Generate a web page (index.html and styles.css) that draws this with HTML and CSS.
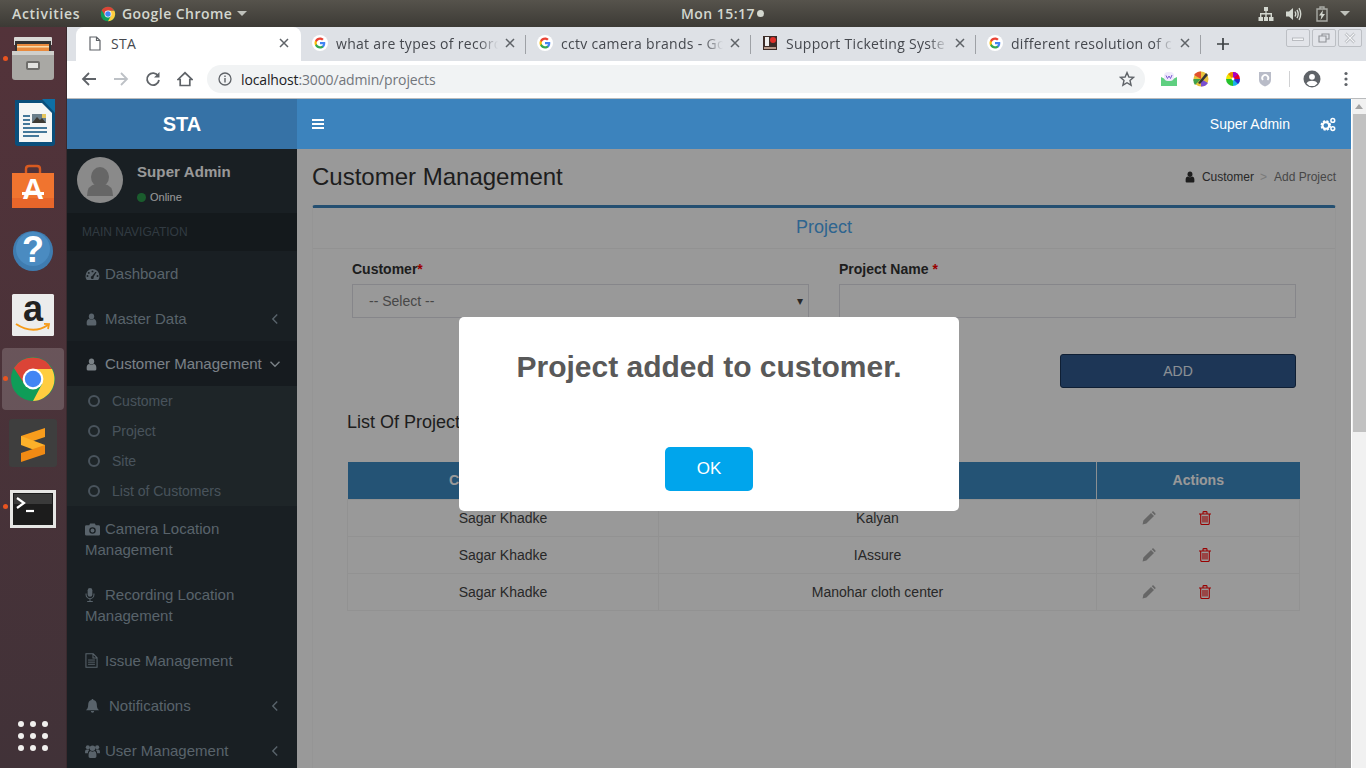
FILE: index.html
```html
<!DOCTYPE html>
<html lang="en">
<head>
<meta charset="utf-8">
<title>STA</title>
<link rel="stylesheet" href="styles.css">
</head>
<body>
<svg class="sprite" aria-hidden="true">
  <symbol id="i-chrome" viewBox="0 0 48 48">
    <circle cx="24" cy="24" r="22" fill="#0f9d58"/>
    <path fill="#db4437" d="M24 14H43.05A22 22 0 0 0 4.95 13L15.4 29 24 24Z"/>
    <path fill="#ffcd40" d="M24 14H43.05A22 22 0 0 1 24 46L33 29Z"/>
    <circle cx="24" cy="24" r="10.4" fill="#fff"/>
    <circle cx="24" cy="24" r="8.2" fill="#4285f4"/>
  </symbol>
  <symbol id="i-g" viewBox="-4 -4 32 32">
    <circle cx="12" cy="12" r="16" fill="#fff"/>
    <path fill="#4285F4" d="M22.56 12.25c0-.78-.07-1.53-.2-2.25H12v4.26h5.92c-.26 1.37-1.04 2.53-2.21 3.31v2.77h3.57c2.08-1.92 3.28-4.74 3.28-8.09z"/>
    <path fill="#34A853" d="M12 23c2.97 0 5.46-.98 7.28-2.66l-3.57-2.77c-.98.66-2.23 1.06-3.71 1.06-2.86 0-5.29-1.93-6.16-4.53H2.18v2.84C3.99 20.53 7.7 23 12 23z"/>
    <path fill="#FBBC05" d="M5.84 14.09c-.22-.66-.35-1.36-.35-2.09s.13-1.43.35-2.09V7.07H2.18C1.43 8.55 1 10.22 1 12s.43 3.45 1.18 4.93l2.85-2.22.81-.62z"/>
    <path fill="#EA4335" d="M12 5.38c1.62 0 3.06.56 4.21 1.64l3.15-3.15C17.45 2.09 14.97 1 12 1 7.7 1 3.99 3.47 2.18 7.07l3.66 2.84c.87-2.6 3.3-4.53 6.16-4.53z"/>
  </symbol>
  <symbol id="i-x" viewBox="0 0 10 10"><path d="M1 1 9 9M9 1 1 9" fill="none" stroke="currentColor" stroke-width="1.5"/></symbol>
  <symbol id="i-user" viewBox="0 0 16 18">
    <ellipse cx="8" cy="4.6" rx="3.9" ry="4.4" fill="currentColor"/>
    <path fill="currentColor" d="M1 16V13C1 10 2.8 8.6 4.6 8.3 6 9.6 10 9.6 11.4 8.3 13.2 8.6 15 10 15 13V16Q15 17.6 13.4 17.6H2.6Q1 17.6 1 16Z"/>
  </symbol>
  <symbol id="i-gauge" viewBox="0 0 16 14">
    <path fill="currentColor" fill-rule="evenodd" d="M8 1A7.5 7.5 0 0 0 .5 8.5C.5 10.3 1 11.8 2 13H14C15 11.8 15.5 10.3 15.5 8.5A7.5 7.5 0 0 0 8 1ZM8 2.6A1 1 0 1 1 8 4.7 1 1 0 0 1 8 2.6ZM4 4.2A1 1 0 1 1 4 6.3 1 1 0 0 1 4 4.2ZM12.4 4.2 9.2 9.6A1.6 1.6 0 1 1 7.6 8.7L11 4.2ZM2.6 7.6A1 1 0 1 1 2.6 9.7 1 1 0 0 1 2.6 7.6ZM13.4 7.6A1 1 0 1 1 13.4 9.7 1 1 0 0 1 13.4 7.6Z"/>
  </symbol>
  <symbol id="i-camera" viewBox="0 0 16 14">
    <path fill="currentColor" fill-rule="evenodd" d="M5.5 1H10.5L11.5 3H14.5Q16 3 16 4.5V12.5Q16 14 14.5 14H1.5Q0 14 0 12.5V4.5Q0 3 1.5 3H4.5ZM8 5A3.5 3.5 0 1 0 8 12 3.5 3.5 0 0 0 8 5ZM8 6.4A2.1 2.1 0 1 1 8 10.6 2.1 2.1 0 0 1 8 6.4Z"/>
  </symbol>
  <symbol id="i-mic" viewBox="0 0 10 15">
    <rect x="2.5" y="0" width="5" height="9.5" rx="2.5" fill="currentColor"/>
    <path d="M.8 6V7.2A4.2 4.2 0 0 0 9.2 7.2V6M5 11.5V14M2 14.4H8" fill="none" stroke="currentColor" stroke-width="1.1"/>
  </symbol>
  <symbol id="i-file" viewBox="0 0 14 16">
    <path fill="none" stroke="currentColor" stroke-width="1.1" d="M1 .8H8.8L13 5V15.2H1ZM8.6 1V5.2H13"/>
    <path fill="none" stroke="currentColor" stroke-width="1" d="M3.3 7.5H10.7M3.3 9.8H10.7M3.3 12.1H10.7"/>
  </symbol>
  <symbol id="i-bell" viewBox="0 0 16 15">
    <path fill="currentColor" d="M8 0C8.7 0 9 .5 9 1 11.4 1.5 12.6 3.2 12.6 6 12.6 9.4 13.6 11 15 12H1C2.4 11 3.4 9.4 3.4 6 3.4 3.2 4.6 1.5 7 1 7 .5 7.3 0 8 0ZM6.2 12.8H9.8A1.8 1.8 0 0 1 6.2 12.8Z"/>
  </symbol>
  <symbol id="i-users" viewBox="0 0 16 15">
    <g fill="currentColor">
      <circle cx="3" cy="3.5" r="2.2"/><circle cx="13" cy="3.5" r="2.2"/><circle cx="8" cy="4.6" r="3"/>
      <path d="M0 10V8Q0 6 2 6H4L4.4 6.5Q3 8 3 10H.6Z"/><path d="M16 10V8Q16 6 14 6H12L11.6 6.5Q13 8 13 10H15.4Z"/>
      <path d="M3.8 13.5V11Q3.8 8 6 7.6 8 9 10 7.6 12.2 8 12.2 11V13.5Q12.2 15 10.6 15H5.4Q3.8 15 3.8 13.5Z"/>
    </g>
  </symbol>
  <symbol id="i-left" viewBox="0 0 8 12"><path d="M6.2 1.5 1.8 6 6.2 10.5" fill="none" stroke="currentColor" stroke-width="1.4"/></symbol>
  <symbol id="i-down" viewBox="0 0 12 8"><path d="M1.5 1.8 6 6.2 10.5 1.8" fill="none" stroke="currentColor" stroke-width="1.4"/></symbol>
  <symbol id="i-pencil" viewBox="0 0 14 14">
    <path fill="currentColor" d="M.6 13.4 1.4 9.6 9 2 12 5 4.4 12.6ZM9.8 1.2 10.4.6Q11 0 11.6.6L13.4 2.4Q14 3 13.4 3.6L12.8 4.2Z"/>
  </symbol>
  <symbol id="i-trash" viewBox="0 0 12 14">
    <path fill="none" stroke="currentColor" stroke-width="1.1" d="M0 3H12M1.7 3V12.2Q1.7 13.5 3 13.5H9Q10.3 13.5 10.3 12.2V3M4 2.8V1.4Q4 .6 4.8 .6H7.2Q8 .6 8 1.4V2.8M4 5V11.5M6 5V11.5M8 5V11.5"/>
  </symbol>
</svg>

<div class="desktop">
  <header class="topbar">
    <span class="top-activities">Activities</span>
    <span class="top-app">
      <svg class="top-chrome"><use href="#i-chrome"/></svg>
      <span>Google Chrome</span>
      <i class="top-caret"></i>
    </span>
    <span class="top-clock">Mon 15:17<i class="clock-dot"></i></span>
    <span class="top-tray">
      <svg class="tray-icon" viewBox="0 0 16 16"><path fill="#d3d7cf" d="M6 1H10V5H8.6V7H14V11H15.5V15H11V11H12.6V8.4H8.7V11H10V15H6V11H7.3V8.4H3.4V11H5V15H.5V11H2V7H7.4V5H6Z"/></svg>
      <svg class="tray-icon" viewBox="0 0 16 16"><path fill="#d3d7cf" d="M0 5.5H3L7 2V14L3 10.5H0Z"/><path fill="none" stroke="#d3d7cf" stroke-width="1.4" d="M9 5.5Q10.5 8 9 10.5M11 3.8Q13.4 8 11 12.2M13 2.2Q16.4 8 13 13.8"/></svg>
      <svg class="tray-icon" viewBox="0 0 16 16"><path fill="none" stroke="#a9aba5" stroke-width="1.4" d="M3 3H13V15H3ZM6 3V1H10V3"/><path fill="#d3d7cf" d="M9 4 5 9.5H7.4L6.6 14 11 8H8.4Z"/></svg>
      <i class="top-caret tray-caret"></i>
    </span>
  </header>

  <div class="workspace">
    <nav class="dock">
      <div class="dock-slot">
        <i class="run-dot"></i>
        <svg class="dock-icon" viewBox="0 0 48 48">
          <path fill="#d9d9d6" d="M5 3Q5 2 6 2H42Q43 2 43 3V10H5Z"/>
          <rect x="6" y="6" width="36" height="10" fill="#333"/>
          <rect x="8" y="9" width="32" height="7" fill="#e98a3c"/>
          <rect x="8" y="11" width="32" height="1.5" fill="#f8d9a8"/>
          <path fill="#a9a8a4" d="M3 16H45V42Q45 45 42 45H6Q3 45 3 42Z"/>
          <path fill="#cfcfcb" d="M3 16H45V20H3Z"/>
          <rect x="17" y="26" width="14" height="9" rx="2" fill="#6e6d6a"/>
          <rect x="19" y="28" width="10" height="5" fill="#e2e2df"/>
        </svg>
      </div>
      <div class="dock-slot">
        <svg class="dock-icon" viewBox="0 0 48 48">
          <path fill="#0a4f7c" d="M6 1H38L46 9V44Q46 47 43 47H9Q6 47 6 44Z"/>
          <path fill="#f4f6f6" d="M10 4H33L43 14V43H10Z"/>
          <path fill="#0e6fa5" d="M33 0H46V14Z"/>
          <rect x="23" y="15" width="14" height="9" fill="#6b7f8b"/>
          <path fill="#3e3b34" d="M23 24 28 18 31 21 33 19 37 24Z"/>
          <rect x="33" y="15" width="4" height="4" fill="#e6c65c"/>
          <path fill="none" stroke="#0a4f7c" stroke-width="1.6" d="M14 17H21M14 21H21M14 25H21M14 29H38M14 33H38M14 37H30"/>
        </svg>
      </div>
      <div class="dock-slot">
        <svg class="dock-icon" viewBox="0 0 48 48">
          <path fill="none" stroke="#d85a20" stroke-width="2.4" d="M17 14V6Q17 3 20 3H28Q31 3 31 6V14"/>
          <path fill="#f0742f" d="M3 10H45V45H3Z"/>
          <path fill="#e8662a" d="M3 35H45V45H3Z"/>
          <text class="dock-a" x="24" y="36" text-anchor="middle">A</text>
          <rect x="13" y="29" width="22" height="3" fill="#fff"/>
        </svg>
      </div>
      <div class="dock-slot">
        <svg class="dock-icon" viewBox="0 0 48 48">
          <circle cx="24" cy="24" r="20" fill="#3f7cb0"/>
          <circle cx="24" cy="22" r="17" fill="#4a8bc1"/>
          <text class="dock-q" x="24" y="35" text-anchor="middle">?</text>
        </svg>
      </div>
      <div class="dock-slot">
        <svg class="dock-icon" viewBox="0 0 48 48">
          <rect x="3" y="3" width="42" height="42" rx="1.5" fill="#ececec"/>
          <text class="dock-amazon" x="24" y="30" text-anchor="middle">a</text>
          <path fill="none" stroke="#f59a17" stroke-width="2" d="M7 33Q24 44 39 34"/>
          <path fill="none" stroke="#f59a17" stroke-width="1.8" d="M35 32.8 40 33 39 38"/>
        </svg>
      </div>
      <div class="dock-slot dock-active">
        <i class="run-dot"></i>
        <svg class="dock-chrome"><use href="#i-chrome"/></svg>
      </div>
      <div class="dock-slot">
        <svg class="dock-icon" viewBox="0 0 48 48">
          <rect width="48" height="48" rx="3" fill="#3e3e3e"/>
          <path fill="#f89c1c" d="M36 9V18L12 26V17Z"/>
          <path fill="#fdb12a" d="M12 17 36 26V35L12 26Z"/>
          <path fill="#f08a14" d="M36 26V35L12 43V34Z"/>
        </svg>
      </div>
      <div class="dock-slot dock-term">
        <i class="run-dot"></i>
        <svg class="dock-icon" viewBox="0 0 48 48">
          <rect x="1" y="5" width="46" height="38" fill="#e6e6e4"/>
          <rect x="4" y="8" width="40" height="32" fill="#1c1c1c"/>
          <rect x="5" y="9" width="38" height="10" fill="#3a3a3a"/>
          <path fill="none" stroke="#fff" stroke-width="2.2" d="M8 13 15 18 8 23"/>
          <path stroke="#fff" stroke-width="2.2" d="M17 26H25"/>
        </svg>
      </div>
      <div class="dock-apps">
        <i></i><i></i><i></i><i></i><i></i><i></i><i></i><i></i><i></i>
      </div>
    </nav>

    <div class="browser">
      <div class="tabstrip">
        <div class="tab tab-active">
          <svg class="tab-page" viewBox="0 0 12 15"><path fill="none" stroke="#5f6368" stroke-width="1.2" d="M1 1H7.5L11 4.5V14H1ZM7.5 1V4.5H11"/></svg>
          <span class="tab-title">STA</span>
          <svg class="tab-x"><use href="#i-x"/></svg>
        </div>
        <div class="tab">
          <svg class="tab-fav"><use href="#i-g"/></svg>
          <span class="tab-title tab-fade">what are types of record</span>
          <svg class="tab-x"><use href="#i-x"/></svg>
        </div>
        <div class="tab">
          <svg class="tab-fav"><use href="#i-g"/></svg>
          <span class="tab-title tab-fade">cctv camera brands - Go</span>
          <svg class="tab-x"><use href="#i-x"/></svg>
        </div>
        <div class="tab">
          <svg class="tab-fav" viewBox="0 0 16 16">
            <rect x="1" y="1" width="14" height="14" fill="#3c2c28"/>
            <rect x="3" y="2" width="4" height="9" fill="#eee"/>
            <circle cx="11" cy="5" r="3" fill="#e0302a"/>
            <rect x="2" y="12" width="12" height="2" fill="#b79a8c"/>
          </svg>
          <span class="tab-title tab-fade">Support Ticketing Syste</span>
          <svg class="tab-x"><use href="#i-x"/></svg>
        </div>
        <div class="tab">
          <svg class="tab-fav"><use href="#i-g"/></svg>
          <span class="tab-title tab-fade">different resolution of c</span>
          <svg class="tab-x"><use href="#i-x"/></svg>
        </div>
        <svg class="tab-new" viewBox="0 0 12 12"><path d="M6 0V12M0 6H12" stroke="#3c4043" stroke-width="1.7"/></svg>
        <div class="win-buttons">
          <span class="win-btn"><svg viewBox="0 0 12 12"><rect x=".5" y="6" width="11" height="2.4" fill="#f4f5f7" stroke="#aeb1b6" stroke-width=".8"/></svg></span>
          <span class="win-btn"><svg viewBox="0 0 12 12"><path d="M1 4H8V10H1ZM4 4V2H11V7H8" fill="none" stroke="#8f9297" stroke-width="1.1"/></svg></span>
          <span class="win-btn"><svg viewBox="0 0 12 12"><path d="M1.5 1.5 10.5 10.5M10.5 1.5 1.5 10.5" stroke="#aeb1b6" stroke-width="2.6"/><path d="M1.5 1.5 10.5 10.5M10.5 1.5 1.5 10.5" stroke="#f4f5f7" stroke-width="1.2"/></svg></span>
        </div>
      </div>

      <div class="toolbar">
        <svg class="tool-icon" viewBox="0 0 16 16"><path d="M15 8H2M8 2 2 8 8 14" fill="none" stroke="#5f6368" stroke-width="1.8"/></svg>
        <svg class="tool-icon" viewBox="0 0 16 16"><path d="M1 8H14M8 2 14 8 8 14" fill="none" stroke="#bdc1c6" stroke-width="1.8"/></svg>
        <svg class="tool-icon" viewBox="0 0 16 16"><path d="M13.2 5A6 6 0 1 0 14 9" fill="none" stroke="#5f6368" stroke-width="1.8"/><path d="M14.5 1V6.5H9Z" fill="#5f6368"/></svg>
        <svg class="tool-icon" viewBox="0 0 16 16"><path d="M1 8.5 8 1.8 15 8.5H12.8V14.5H3.2V8.5Z" fill="none" stroke="#5f6368" stroke-width="1.7"/></svg>
        <div class="omnibox">
          <svg class="omni-info" viewBox="0 0 14 14"><circle cx="7" cy="7" r="6" fill="none" stroke="#5f6368" stroke-width="1.3"/><path d="M7 6V10.5M7 3.4V5" stroke="#5f6368" stroke-width="1.4"/></svg>
          <span class="omni-url"><b>localhost</b>:3000/admin/projects</span>
          <svg class="omni-star" viewBox="0 0 16 16"><path d="M8 1.6 9.9 6 14.6 6.4 11 9.5 12.1 14.2 8 11.7 3.9 14.2 5 9.5 1.4 6.4 6.1 6Z" fill="none" stroke="#5f6368" stroke-width="1.4"/></svg>
        </div>
        <div class="extensions">
          <svg class="ext" viewBox="0 0 16 16"><path d="M0 6 8 10 16 6V15H0Z" fill="#5fcf80"/><rect x="3" y="1" width="10" height="9" rx="4" fill="#efeafc"/><path d="M5 4.5 6.5 7.5 8 5 9.5 7.5 11 4" fill="none" stroke="#7e5bd6" stroke-width="1"/></svg>
          <svg class="ext" viewBox="0 0 16 16"><circle cx="8" cy="8" r="7.5" fill="#e8c23c"/><path d="M8 8 1 4A8 8 0 0 1 8 .5Z" fill="#e0502e"/><path d="M8 8 2 14A8 8 0 0 1 .5 8Z" fill="#3fa14a"/><path d="M8 8 15 12A8 8 0 0 1 8 15.5Z" fill="#7a4fd0"/><path d="M5 12 13 2 15 4 7 13Z" fill="#333"/></svg>
          <svg class="ext" viewBox="0 0 16 16"><path d="M8 8V1A7 7 0 0 1 15 8Z" fill="#e4002b"/><path d="M8 8H15A7 7 0 0 1 8 15Z" fill="#19b4e8"/><path d="M8 8V15A7 7 0 0 1 1 8Z" fill="#26c22c"/><path d="M8 8H1A7 7 0 0 1 8 1Z" fill="#f2e500"/><path d="M8 8 3 3A7 7 0 0 1 8 1Z" fill="#f28a00"/><path d="M8 8 13 3A7 7 0 0 0 8 1Z" fill="#a600c8"/><path d="M8 8 13 13A7 7 0 0 0 15 8Z" fill="#2a2ad0"/><circle cx="8" cy="8" r="1.4" fill="#fff"/></svg>
          <svg class="ext" viewBox="0 0 16 16"><path d="M2 1H14V9Q14 13 8 15.5 2 13 2 9Z" fill="#b9bcc8"/><path d="M6 9A3 3 0 1 1 10.5 9" fill="none" stroke="#fff" stroke-width="1.8"/></svg>
          <i class="ext-sep"></i>
          <svg class="ext ext-avatar" viewBox="0 0 18 18"><circle cx="9" cy="9" r="8.5" fill="#5f6368"/><circle cx="9" cy="6.8" r="2.9" fill="#fff"/><path d="M3.5 13.4C4.6 11.4 7 10.8 9 10.8S13.4 11.4 14.5 13.4A7 7 0 0 1 3.5 13.4Z" fill="#fff"/></svg>
          <svg class="ext-menu" viewBox="0 0 4 16"><circle cx="2" cy="2.5" r="1.6" fill="#5f6368"/><circle cx="2" cy="8" r="1.6" fill="#5f6368"/><circle cx="2" cy="13.5" r="1.6" fill="#5f6368"/></svg>
        </div>
      </div>

      <div class="viewport">
        <div class="app">
          <div class="app-header">
            <div class="logo">STA</div>
            <div class="navbar">
              <svg class="nav-bars" viewBox="0 0 12 10"><path d="M0 1H12M0 5H12M0 9H12" stroke="#fff" stroke-width="1.8"/></svg>
              <span class="nav-user">Super Admin</span>
              <svg class="nav-cogs" viewBox="0 0 16 15">
                <circle cx="5.8" cy="8.5" r="4" fill="none" stroke="#fff" stroke-width="2.6" stroke-dasharray="2 1.15"/>
                <circle cx="5.8" cy="8.5" r="3.3" fill="none" stroke="#fff" stroke-width="2"/>
                <circle cx="12.8" cy="3.4" r="1.9" fill="none" stroke="#fff" stroke-width="1.5"/>
                <circle cx="12.8" cy="11.6" r="1.9" fill="none" stroke="#fff" stroke-width="1.5"/>
              </svg>
            </div>
          </div>
          <div class="app-body">
            <aside class="sidebar">
              <div class="user-panel">
                <svg class="avatar" viewBox="0 0 46 46">
                  <circle cx="23" cy="23" r="23" fill="#e6e6e6"/>
                  <ellipse cx="23" cy="20" rx="9" ry="10" fill="#aaa"/>
                  <path d="M10 39Q10 28 19 27H27Q36 28 36 39Z" fill="#aaa"/>
                </svg>
                <div class="user-info">
                  <div class="user-name">Super Admin</div>
                  <div class="user-status"><i class="status-dot"></i>Online</div>
                </div>
              </div>
              <div class="nav-label">MAIN NAVIGATION</div>
              <a class="nav-item"><svg class="ni ni-gauge"><use href="#i-gauge"/></svg>Dashboard</a>
              <a class="nav-item nav-row"><span><svg class="ni ni-user"><use href="#i-user"/></svg>Master Data</span><svg class="caret-left"><use href="#i-left"/></svg></a>
              <a class="nav-item nav-row nav-open"><span><svg class="ni ni-user"><use href="#i-user"/></svg>Customer Management</span><svg class="caret-down"><use href="#i-down"/></svg></a>
              <ul class="subnav">
                <li><i class="sub-dot"></i>Customer</li>
                <li><i class="sub-dot"></i>Project</li>
                <li><i class="sub-dot"></i>Site</li>
                <li><i class="sub-dot"></i>List of Customers</li>
              </ul>
              <a class="nav-item"><svg class="ni ni-camera"><use href="#i-camera"/></svg>Camera Location Management</a>
              <a class="nav-item"><svg class="ni ni-mic"><use href="#i-mic"/></svg>Recording Location Management</a>
              <a class="nav-item"><svg class="ni ni-file"><use href="#i-file"/></svg>Issue Management</a>
              <a class="nav-item nav-row"><span><svg class="ni ni-bell"><use href="#i-bell"/></svg>Notifications</span><svg class="caret-left"><use href="#i-left"/></svg></a>
              <a class="nav-item nav-row"><span><svg class="ni ni-camera"><use href="#i-users"/></svg>User Management</span><svg class="caret-left"><use href="#i-left"/></svg></a>
            </aside>

            <main class="content">
              <div class="content-head">
                <h1 class="page-title">Customer Management</h1>
                <div class="crumbs">
                  <svg class="crumb-icon"><use href="#i-user"/></svg>
                  <span class="crumb-link">Customer</span>
                  <span class="crumb-sep">&gt;</span>
                  <span class="crumb-now">Add Project</span>
                </div>
              </div>
              <section class="box">
                <h2 class="box-title">Project</h2>
                <div class="box-body">
                  <form class="form">
                    <div class="form-row">
                      <div class="field">
                        <label class="label">Customer<span class="req">*</span></label>
                        <div class="select">-- Select --<i class="select-arrow">▾</i></div>
                      </div>
                      <div class="field">
                        <label class="label">Project Name <span class="req">*</span></label>
                        <div class="input"></div>
                      </div>
                    </div>
                    <div class="form-actions"><button class="btn-add" type="button">ADD</button></div>
                  </form>
                  <h3 class="list-title">List Of Projects</h3>
                  <table class="table">
                    <thead>
                      <tr><th class="col-a">Customer Name</th><th class="col-b">Project Name</th><th class="col-c">Actions</th></tr>
                    </thead>
                    <tbody>
                      <tr><td>Sagar Khadke</td><td>Kalyan</td><td><div class="actions"><svg class="a-edit"><use href="#i-pencil"/></svg><svg class="a-del"><use href="#i-trash"/></svg></div></td></tr>
                      <tr><td>Sagar Khadke</td><td>IAssure</td><td><div class="actions"><svg class="a-edit"><use href="#i-pencil"/></svg><svg class="a-del"><use href="#i-trash"/></svg></div></td></tr>
                      <tr><td>Sagar Khadke</td><td>Manohar cloth center</td><td><div class="actions"><svg class="a-edit"><use href="#i-pencil"/></svg><svg class="a-del"><use href="#i-trash"/></svg></div></td></tr>
                    </tbody>
                  </table>
                </div>
              </section>
            </main>

            <div class="overlay">
              <div class="modal">
                <h2 class="modal-title">Project added to customer.</h2>
                <button class="modal-ok" type="button">OK</button>
              </div>
            </div>
          </div>
        </div>
        <div class="scrollbar">
          <i class="scroll-up"></i>
          <div class="scroll-thumb"></div>
        </div>
      </div>
    </div>
  </div>
</div>
</body>
</html>
```

FILE: styles.css
```css
* { box-sizing: border-box; }
html, body { margin: 0; padding: 0; height: 100%; overflow: hidden; }
body { font-family: "Liberation Sans", Arial, sans-serif; font-size: 14px; color: #333; }
.sprite { display: none; }
i { font-style: normal; }

.desktop { width: 1366px; height: 768px; display: flex; flex-direction: column; overflow: hidden; }

/* GNOME top bar */
.topbar { height: 27px; flex: none; display: flex; align-items: center; background: linear-gradient(#56534c, #3c3a35); color: #d3d7cf; font-family: "Open Sans", sans-serif; font-size: 14px; font-weight: 600; letter-spacing: .45px; padding-left: 12px; }
.top-activities { width: 88px; letter-spacing: .7px; }
.top-app { display: flex; align-items: center; width: 581px; }
.top-chrome { width: 16px; height: 16px; margin-right: 6px; }
.top-caret { width: 0; height: 0; border-left: 5px solid transparent; border-right: 5px solid transparent; border-top: 5px solid #bfc1bb; margin-left: 5px; }
.top-clock { display: flex; align-items: center; width: 100px; }
.clock-dot { width: 7px; height: 7px; border-radius: 50%; background: #d3d7cf; margin-left: 2px; }
.top-tray { display: flex; align-items: center; margin-left: auto; gap: 12px; padding-right: 16px; }
.tray-icon { width: 16px; height: 16px; }
.tray-caret { margin-left: -2px; }

.workspace { flex: 1; display: flex; min-height: 0; }

/* Dock */
.dock { width: 67px; flex: none; display: flex; flex-direction: column; align-items: center; background: linear-gradient(#53333a, #413238); box-shadow: inset -1px 0 0 #3a2a2e; position: relative; }
.dock-slot { width: 62px; height: 64px; margin-left: -1px; display: flex; align-items: center; justify-content: center; position: relative; }
.dock-icon { width: 48px; height: 48px; }
.dock-active { height: 62px; margin-top: 1px; margin-bottom: 1px; border-radius: 4px; background: rgba(255,255,255,.17); }
.dock-term { padding-top: 4px; }
.dock-chrome { width: 48px; height: 48px; }
.run-dot { position: absolute; left: 1px; top: 50%; margin-top: -3px; width: 5px; height: 5px; border-radius: 50%; background: #e95420; }
.dock-a { font: bold 30px "Liberation Sans", sans-serif; fill: #fff; }
.dock-q { font: bold 36px "Liberation Sans", sans-serif; fill: #fff; }
.dock-amazon { font: bold 36px "Liberation Sans", sans-serif; fill: #222; }
.dock-apps { margin-top: auto; margin-bottom: 17px; width: 30px; display: grid; grid-template-columns: repeat(3, 6px); gap: 6px; margin-left: -1px; }
.dock-apps i { width: 6px; height: 6px; border-radius: 50%; background: #f1f0ee; }

/* Chrome */
.browser { flex: 1; display: flex; flex-direction: column; min-width: 0; }
.tabstrip { height: 34px; flex: none; background: #dee1e6; display: flex; padding-left: 9px; position: relative; font-family: "Open Sans", sans-serif; font-size: 14px; color: #45484e; }
.tab { width: 225px; height: 34px; flex: none; display: flex; align-items: center; padding-left: 10px; padding-bottom: 2px; position: relative; }
.tab::after { content: ""; position: absolute; right: 0; top: 8px; width: 1px; height: 19px; background: #9ea1a6; }
.tab-active { width: 225px; background: #fff; border-radius: 8px 8px 0 0; padding-left: 13px; }
.tab-active::after { display: none; }
.tab-page { width: 12px; height: 15px; margin-right: 10px; }
.tab-fav { width: 16px; height: 16px; margin-right: 8px; flex: none; margin-left: 1px; }
.tab-title { display: block; width: 162px; overflow: hidden; white-space: nowrap; flex: none; letter-spacing: .3px; }
.tab-active .tab-title { width: 159px; }
.tab-fade { -webkit-mask-image: linear-gradient(90deg, #000 88%, transparent); mask-image: linear-gradient(90deg, #000 88%, transparent); }
.tab-x { width: 10px; height: 10px; margin-left: 7px; color: #5f6368; flex: none; }
.tab-active .tab-x { margin-left: 9px; }
.tab-new { width: 12px; height: 12px; margin: 11px 0 0 16px; flex: none; }
.win-buttons { margin-left: auto; display: flex; gap: 2px; padding: 2px 4px 0 0; }
.win-btn { width: 24px; height: 18px; border: 1px solid #bcbfc4; border-radius: 2px; background: #e2e4e9; display: flex; align-items: center; justify-content: center; }
.win-btn svg { width: 12px; height: 12px; }

.toolbar { height: 38px; flex: none; display: flex; align-items: center; padding-left: 14px; background: #fff; border-bottom: 1px solid #b9bbbd; padding-bottom: 1px; }
.tool-icon { width: 16px; height: 16px; margin-right: 16px; flex: none; }
.omnibox { width: 938px; height: 28px; margin-left: -2px; border-radius: 14px; background: #f1f3f4; display: flex; align-items: center; padding: 0 10px 0 11px; font-family: "Open Sans", sans-serif; font-size: 14px; letter-spacing: -.14px; color: #72767c; flex: none; }
.omni-info { width: 14px; height: 14px; margin-right: 9px; flex: none; }
.omni-url b { font-weight: 400; color: #202124; }
.omni-star { width: 16px; height: 16px; margin-left: auto; }
.extensions { display: flex; align-items: center; padding-left: 16px; }
.ext { width: 16px; height: 16px; margin-right: 16px; flex: none; }
.ext-sep { width: 1px; height: 16px; background: #d0d1d3; margin: 0 13px 0 0; }
.ext-avatar { width: 18px; height: 18px; margin-right: 23px; }
.ext-menu { width: 4px; height: 16px; }

/* App */
.viewport { flex: 1; display: flex; min-height: 0; }
.app { flex: 1; display: flex; flex-direction: column; min-width: 0; }
.app-header { height: 50px; flex: none; display: flex; }
.logo { width: 230px; flex: none; background: #3672a6; color: #fff; font-size: 20px; font-weight: bold; display: flex; align-items: center; justify-content: center; }
.navbar { flex: 1; background: #3c83bd; color: #fff; display: flex; align-items: center; padding: 0 15px; }
.nav-bars { width: 12px; height: 10px; }
.nav-user { margin-left: auto; font-size: 14px; }
.nav-cogs { width: 16px; height: 15px; margin-left: 30px; }

.app-body { flex: 1; display: flex; position: relative; min-height: 0; overflow: hidden; }
.sidebar { width: 230px; flex: none; background: #2a343b; color: #94a5b2; font-size: 15px; }
.user-panel { height: 64px; display: flex; padding: 8px 10px; }
.avatar { width: 46px; height: 46px; flex: none; }
.user-info { margin-left: 14px; padding-top: 5px; }
.user-name { font-weight: bold; font-size: 15px; color: #fff; letter-spacing: .1px; line-height: 20px; }
.user-status { font-size: 11px; color: #fff; display: flex; align-items: center; margin-top: 8px; line-height: 14px; }
.status-dot { width: 9px; height: 9px; border-radius: 50%; background: #2c9a4c; margin-right: 4px; }
.nav-label { height: 38px; background: #222a2f; color: #52626e; font-size: 12px; display: flex; align-items: center; padding-left: 15px; }
.nav-item { display: block; padding: 12px 18px; line-height: 21px; }
.nav-row { display: flex; justify-content: space-between; align-items: center; }
.nav-open { background: #262e35; color: #ccd8e0; }
.ni { display: inline-block; vertical-align: -2px; margin-right: 5px; }
.ni-gauge { width: 15px; height: 13px; }
.ni-user { width: 11px; height: 13px; margin-left: 1px; margin-right: 8px; }
.ni-camera { width: 15px; height: 14px; }
.ni-mic { width: 10px; height: 14px; margin-right: 10px; }
.ni-file { width: 13px; height: 15px; margin-right: 7px; }
.ni-bell { width: 15px; height: 14px; margin-right: 9px; }
.caret-left { width: 8px; height: 12px; margin-right: 0; }
.caret-down { width: 12px; height: 8px; margin-right: -2px; }
.subnav { list-style: none; margin: 0; padding: 0; background: #323f44; color: #7a8b99; font-size: 14px; }
.subnav li { height: 30px; display: flex; align-items: center; padding-left: 21px; }
.sub-dot { width: 12px; height: 12px; border-radius: 50%; border: 2px solid #7a8b99; margin-right: 12px; flex: none; }

.content { flex: 1; display: flex; flex-direction: column; padding: 0 15px; background: #fff; min-width: 0; }
.content-head { height: 56px; flex: none; display: flex; align-items: center; justify-content: space-between; }
.page-title { margin: 0; font-size: 24px; font-weight: 400; color: #333; line-height: 56px; }
.crumbs { display: flex; align-items: center; font-size: 12px; color: #444; }
.crumb-icon { width: 10px; height: 12px; margin-right: 7px; color: #333; }
.crumb-sep { color: #ccc; margin: 0 7px 0 6px; }
.crumb-now { color: #777; }
.box { flex: 1; border-top: 3px solid #3c84bc; border-radius: 3px 3px 0 0; border-left: 1px solid #f9f9f9; border-right: 1px solid #f9f9f9; min-height: 0; }
.box-title { margin: 0; height: 41px; border-bottom: 1px solid #f4f4f4; font-size: 18px; font-weight: 400; color: #4ea8ef; text-align: center; line-height: 38px; }
.box-body { padding: 10px 34px 0; }
.form { padding: 0 5px; }
.form-row { display: flex; gap: 30px; }
.field { flex: 1; min-width: 0; }
.label { display: block; font-weight: bold; font-size: 14px; line-height: 20px; margin-bottom: 5px; }
.req { color: #f00; }
.select { position: relative; height: 34px; border: 1px solid #e0e0e6; padding-left: 16px; line-height: 32px; color: #777; font-size: 14px; background: #fff; }
.select-arrow { position: absolute; right: 5px; top: 0; color: #444; font-size: 12px; }
.input { height: 34px; border: 1px solid #e0e0e6; background: #fff; }
.form-actions { display: flex; justify-content: flex-end; margin-top: 36px; }
.btn-add { width: 236px; height: 34px; border: 1px solid #1a3558; border-radius: 3px; background: #315a8f; color: #e8f0f8; font: 14px "Liberation Sans", sans-serif; }
.list-title { margin: 22px 0 28px; font-size: 18px; font-weight: 400; line-height: 24px; color: #333; }
.table { width: 952px; table-layout: fixed; border-collapse: collapse; text-align: center; font-size: 14px; }
.table th { height: 37px; background: #3d8ac3; color: #fff; font-weight: bold; border-right: 1px solid #e8eef3; }
.table th:last-child { border-right: 0; }
.table td { height: 37px; padding: 0; border: 1px solid #f4f4f4; color: #444; }
.col-a { width: 311px; }
.col-b { width: 438px; }
.col-c { width: 203px; }
.actions { display: flex; align-items: center; padding-left: 45px; }
.a-edit { width: 14px; height: 14px; color: #aaa; }
.a-del { width: 12px; height: 14px; color: #f00; margin-left: 43px; }

.overlay { position: absolute; inset: 0; background: rgba(0,0,0,.4); display: flex; align-items: flex-start; justify-content: center; padding-top: 168px; }
.modal { width: 500px; height: 194px; background: #fff; border-radius: 5px; display: flex; flex-direction: column; align-items: center; }
.modal-title { margin: 28px 0 0; font-size: 30px; font-weight: bold; line-height: 44px; color: #595959; }
.modal-ok { margin-top: 58px; width: 88px; height: 44px; border: 0; border-radius: 5px; background: #00a5ec; color: #fff; font: 17px "Liberation Sans", sans-serif; }

.scrollbar { width: 15px; flex: none; background: #f1f1f1; display: flex; flex-direction: column; align-items: center; box-shadow: inset 1px 0 0 #fff; }
.scroll-up { width: 0; height: 0; margin: 5px 0 5px; border-left: 4px solid transparent; border-right: 4px solid transparent; border-bottom: 5px solid #a3a3a3; }
.scroll-thumb { width: 13px; height: 318px; background: #c1c1c1; margin-left: 1px; }
```
